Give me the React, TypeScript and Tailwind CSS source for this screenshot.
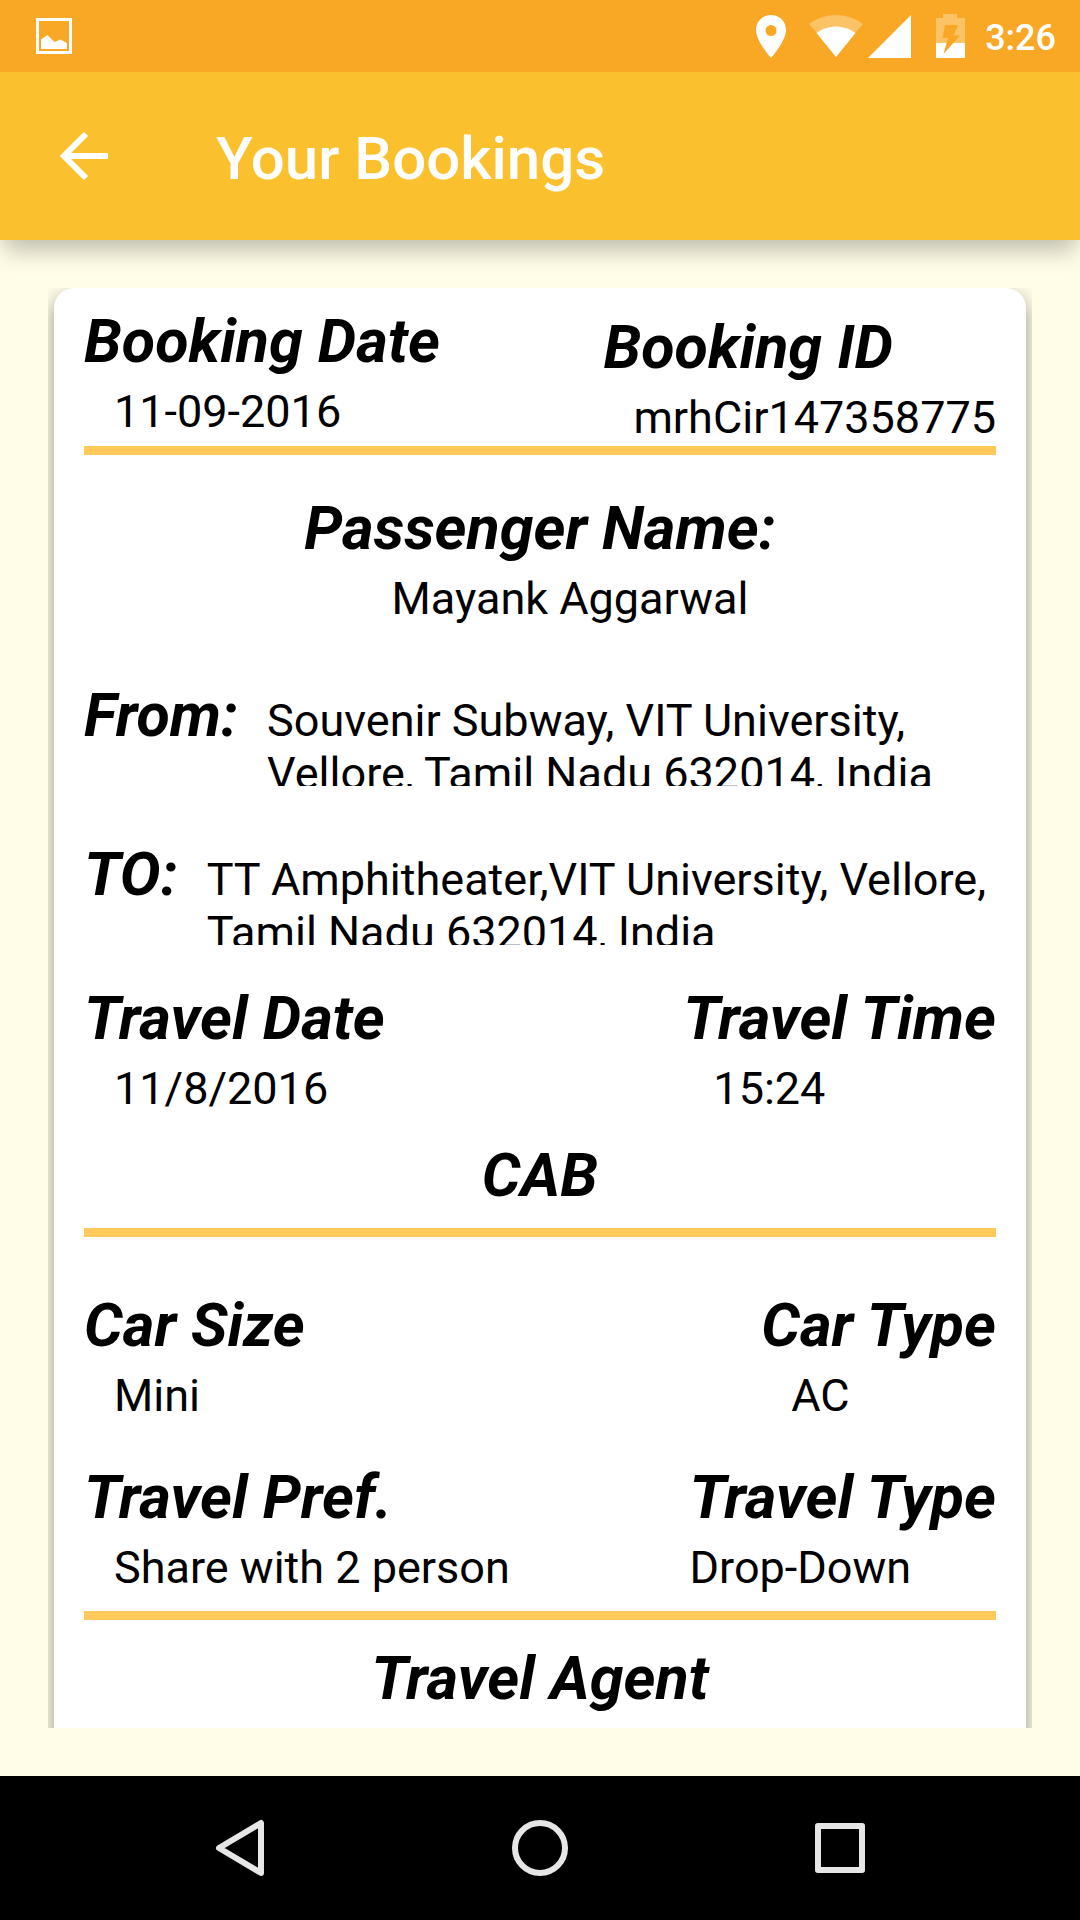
import React, { ReactNode } from 'react';

function Title({ children }: { children: ReactNode }) {
  return <h2 className="text-[61px] leading-[70px] font-bold italic whitespace-nowrap">{children}</h2>;
}

function Field({ title, value, indent = true }: { title: string; value: string; indent?: boolean }) {
  return (
    <div>
      <Title>{title}</Title>
      <p className={`mt-[9px] text-[45px] leading-[53px] whitespace-nowrap ${indent ? 'pl-[30px]' : ''}`}>{value}</p>
    </div>
  );
}

function Place({ title, value }: { title: string; value: string }) {
  return (
    <div className="flex items-start gap-[29px]">
      <Title>{title}</Title>
      <p className="mt-[14px] h-[92px] flex-1 overflow-hidden text-[45px] leading-[53px]">{value}</p>
    </div>
  );
}

function Rule() {
  return <hr className="h-[9px] border-0 bg-[#ffca5a]" />;
}

function StatusBar() {
  return (
    <div className="relative z-20 flex h-[72px] shrink-0 items-center justify-between bg-[#f9a825] pl-9 pr-6 text-white">
      <svg width="36" height="36" viewBox="0 0 36 36" fill="none">
        <rect x="1.5" y="1.5" width="33" height="33" stroke="currentColor" strokeWidth="3" />
        <path d="M5 31V21.500L11.500 17L18.500 24L24.500 21.500L31 25V31Z" fill="currentColor" />
      </svg>
      <div className="flex items-center">
        <svg className="mr-[22px]" width="32" height="44" viewBox="0 0 32 44">
          <path fill="currentColor" fillRule="evenodd" d="M16 1C7.500 1 1 7.500 1 16C1 27 16 44 16 44S31 27 31 16C31 7.500 24.500 1 16 1ZM16 11A5.500 5.500 0 1 1 16 22A5.500 5.500 0 1 1 16 11Z" />
        </svg>
        <svg className="mr-[5px]" width="54" height="44" viewBox="0 0 54 44">
          <path fill="currentColor" opacity=".3" d="M0 10Q12 1 27 1T54 10L46 19L27 43L8 19Z" />
          <path fill="currentColor" d="M7.500 19Q16 12.500 27 12.500T46.500 19L27 43Z" />
        </svg>
        <svg className="mr-[25px]" width="43" height="43" viewBox="0 0 43 43"><path fill="currentColor" d="M0 43L43 0V43Z" /></svg>
        <svg className="mr-5" width="29" height="44" viewBox="0 0 29 44">
          <path fill="currentColor" opacity=".3" d="M0 4H7V0H21V4H29V29H0Z" />
          <path fill="currentColor" d="M0 29H29V44H0Z" />
          <path fill="#f9a825" d="M9 11H22L17.500 21.500H24L7.500 40L12 24H6.500Z" />
        </svg>
        <time className="pt-[3px] text-[36px] leading-[42px] font-medium">3:26</time>
      </div>
    </div>
  );
}

function NavBar() {
  const button = 'flex h-[144px] w-[180px] items-center justify-center';
  return (
    <nav aria-label="System" className="flex h-[144px] shrink-0 items-center justify-center gap-[120px] bg-black text-[#e6e6e6]">
      <button aria-label="Back" className={button}>
        <svg width="60" height="60" viewBox="0 0 60 60" fill="none" stroke="currentColor" strokeWidth="6" strokeLinejoin="round">
          <path d="M51 5V55L9 30Z" />
        </svg>
      </button>
      <button aria-label="Home" className={button}>
        <svg width="60" height="60" viewBox="0 0 60 60" fill="none" stroke="currentColor" strokeWidth="6">
          <circle cx="30" cy="30" r="25" />
        </svg>
      </button>
      <button aria-label="Recent apps" className={button}>
        <svg width="60" height="60" viewBox="0 0 60 60" fill="none" stroke="currentColor" strokeWidth="6" strokeLinejoin="round">
          <rect x="8" y="8" width="44" height="44" />
        </svg>
      </button>
    </nav>
  );
}

export default function App() {
  return (
    <div className="flex h-screen flex-col overflow-hidden bg-[#fffde7] font-[Roboto,sans-serif] text-black">
      <StatusBar />
      <header className="relative z-10 flex h-[168px] shrink-0 items-center bg-[#fbc02d] pl-12 text-white shadow-[0_14px_22px_-4px_rgba(0,0,0,0.26)]">
        <button aria-label="Back" className="flex size-[72px] items-center justify-center">
          <svg width="48" height="48" viewBox="0 0 48 48" fill="none" stroke="currentColor" strokeWidth="6">
            <path d="M48 24H5M26 2L4 24L26 46" />
          </svg>
        </button>
        <h1 className="ml-24 pt-[5px] text-[60px] leading-[70px] font-medium">Your Bookings</h1>
      </header>
      <main className="flex min-h-0 flex-1 flex-col p-12">
        <div className="min-h-0 flex-1 overflow-hidden px-[6px]">
          <article className="rounded-[20px] bg-white px-[30px] pt-[18px] pb-[60px] shadow-[0_8px_20px_rgba(0,0,0,0.42)]">
            <section className="flex justify-between">
              <Field title="Booking Date" value="11-09-2016" />
              <div className="pt-[6px]">
                <Field title="Booking ID" value="mrhCir147358775" />
              </div>
            </section>
            <div className="mt-[2px]">
              <Rule />
            </div>
            <section className="mt-[38px] flex flex-col items-center">
              <Title>Passenger Name:</Title>
              <p className="mt-[9px] pl-[60px] text-[45px] leading-[53px]">Mayank Aggarwal</p>
            </section>
            <section className="mt-[55px] flex flex-col gap-[53px]">
              <Place title="From:" value="Souvenir Subway, VIT University, Vellore, Tamil Nadu 632014, India" />
              <Place title="TO:" value="TT Amphitheater,VIT University, Vellore, Tamil Nadu 632014, India" />
            </section>
            <section className="mt-[38px] flex justify-between">
              <Field title="Travel Date" value="11/8/2016" />
              <Field title="Travel Time" value="15:24" />
            </section>
            <section className="mt-[25px] mb-[18px] text-center">
              <Title>CAB</Title>
            </section>
            <Rule />
            <section className="mt-[53px] flex justify-between">
              <Field title="Car Size" value="Mini" />
              <Field title="Car Type" value="AC" />
            </section>
            <section className="mt-[40px] mb-[17px] flex justify-between">
              <Field title="Travel Pref." value="Share with 2 person" />
              <Field title="Travel Type" value="Drop-Down" indent={false} />
            </section>
            <Rule />
            <section className="mt-[23px] text-center">
              <Title>Travel Agent</Title>
            </section>
          </article>
        </div>
      </main>
      <NavBar />
    </div>
  );
}
